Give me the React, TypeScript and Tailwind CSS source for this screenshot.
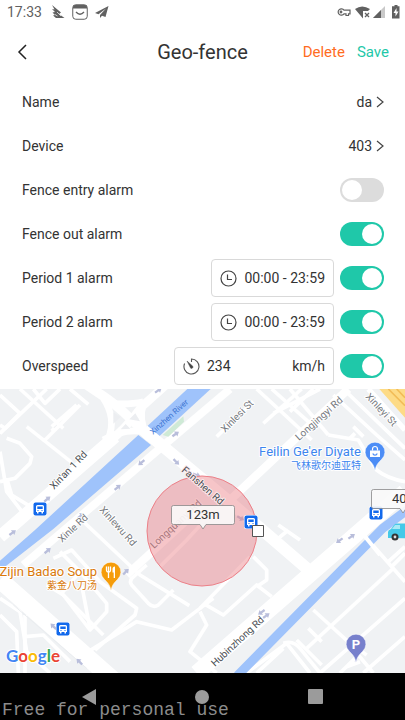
import { useId, useState } from "react";
import type { ReactNode } from "react";

const streetLabels = [
    { text: "Xin'an 1 Rd", x: 54, y: 101, angle: -46, size: 10, color: "#4b4f54" },
    { text: "Xinle Rd", x: 62, y: 154, angle: -43, size: 10, color: "#75797e" },
    { text: "Xinlewu Rd", x: 99, y: 121, angle: 48, size: 10, color: "#75797e" },
    { text: "Xinlesi St", x: 225, y: 44, angle: -45, size: 10, color: "#75797e" },
    { text: "Longjingyi Rd", x: 299, y: 52, angle: -42, size: 10, color: "#75797e" },
    { text: "Xinleyi St", x: 365, y: 8, angle: 47, size: 10, color: "#75797e" },
    { text: "Hubinzhong Rd", x: 215, y: 278, angle: -43, size: 10, color: "#4b4f54" },
    { text: "Longquanyi Rd", x: 154, y: 160, angle: -43, size: 10, color: "#75797e" },
];

const minorRoads = [
    "M0 145 L140 12",
    "M60 12 L190 130",
    "M100 12 L135 55 L180 12",
    "M0 30 L60 85 L15 130 L0 120",
    "M80 125 L215 232",
    "M135 165 L240 60 M155 130 L165 140 M155 125 L230 60",
    "M20 160 L60 175 L95 215 L90 235 L45 280 L0 290",
    "M0 200 L20 320 L70 385 M20 280 L35 330 L100 370",
    "M210 12 L265 58",
    "M650 155 L760 50",
    "M770 12 L860 95 L935 165",
    "M815 12 L925 110",
    "M790 115 L905 12",
    "M820 85 L960 12",
    "M870 12 L985 150",
    "M940 12 L870 80",
    "M1030 12 L1215 190",
    "M1000 30 L1130 150 L1215 225",
    "M985 150 L1075 165 L1130 255 Q1160 280 1215 290",
    "M1050 160 L1065 145 M1060 125 L1090 155",
    "M250 410 L420 570 L568 662",
    "M160 520 L215 495 L300 590 L410 670 L405 690 L285 795",
    "M180 500 L240 560 L185 625 L310 750",
    "M140 600 L190 630 L270 735 L320 680 L320 655 L240 560",
    "M245 600 L270 730",
    "M0 640 L60 680 L80 800 L150 864",
    "M75 690 L75 864 M75 755 L130 750 L210 830",
    "M0 690 L50 740 L55 864",
    "M265 800 L410 710 L515 735 L600 670 L640 640",
    "M440 540 L395 580 Q388 590 395 600 L445 655 Q460 670 475 660 L520 615",
    "M480 545 L560 465 L620 400",
    "M600 670 L750 515",
    "M610 655 L670 690 L770 600 L815 635",
    "M760 515 L800 555 L800 585 L770 605",
    "M600 680 L620 720 L570 800 L650 864",
    "M835 420 L900 465 M835 460 L865 435",
    "M940 675 L1050 775 L1100 810",
    "M890 765 L965 840 M925 730 L965 770",
    "M920 790 L1180 550",
    "M1100 460 L1215 590",
    "M1165 530 L1215 485 M1175 545 L1215 505",
    "M960 864 L1215 640",
    "M1090 864 L1215 755",
    "M1020 864 L1075 810 L1120 864 M1040 845 L1080 830",
    "M740 864 L860 775 L930 864 M850 790 L770 864",
    "M850 775 Q880 765 900 790 L960 864",
];

// position and heading of the one-way arrows
const arrows: [number, number, number][] = [
    [475, 16, -35],
    [527, 147, -35],
    [424, 233, 140],
    [529, 231, 45],
    [590, 270, 20],
    [353, 307, -40],
    [142, 342, -40],
    [38, 443, -35],
    [243, 392, -40],
    [143, 497, -40],
    [378, 560, -45],
    [160, 724, 225],
    [238, 830, 225],
    [722, 400, 30],
    [1018, 467, 145],
    [1055, 454, -35],
    [784, 682, 145],
    [799, 692, -35],
];

const busStops: [number, number][] = [
    [40, 120],
    [63, 240],
    [376, 124],
    [251, 133],
];

function BusStop({ x, y }: { x: number; y: number }) {
    return (
        <g transform={`translate(${x} ${y})`}>
            <rect x="-7" y="-7" width="14" height="14" rx="2" fill="#fff" />
            <rect x="-6.5" y="-6.5" width="13" height="13" rx="2" fill="#1269ec" />
            <path d="M-4 -2.500q0-1.500 1.500-1.500h5q1.500 0 1.500 1.500V3H3v1.500H1.500V3h-3v1.500H-3V3h-1z" fill="#fff" />
            <path d="M-2.700-2.500h5.400V0h-5.400z" fill="#1269ec" />
            <path d="M-2.500 1h1v1h-1zM1.500 1h1v1h-1z" fill="#1269ec" />
        </g>
    );
}

function MapPin({ x, y, color, children }: { x: number; y: number; color: string; children: ReactNode }) {
    return (
        <g transform={`translate(${x} ${y})`}>
            <path
                d="M0 18.500C-1.200 12.500-3.500 10.500-6.500 7.500A9.900 9.900 0 1 1 6.500 7.500C3.500 10.500 1.200 12.500 0 18.500z"
                fill={color}
                stroke="#fff"
                strokeWidth="0.500"
            />
            {children}
        </g>
    );
}

function Callout({ x, y, text }: { x: number; y: number; text: string }) {
    return (
        <g transform={`translate(${x} ${y})`}>
            <path
                d="M-29.500-9.500h59a2 2 0 0 1 2 2v15a2 2 0 0 1-2 2H3L0 14l-3-4.500h-26.500a2 2 0 0 1-2-2v-15a2 2 0 0 1 2-2z"
                fill="#fafafa"
                fillOpacity="0.900"
                stroke="#888"
                strokeWidth="0.800"
            />
            <text y="4" textAnchor="middle" fontSize="13" fill="#333">
                {text}
            </text>
        </g>
    );
}

function FenceMap() {
    return (
        <svg
            viewBox="0 0 405 284"
            preserveAspectRatio="xMidYMid slice"
            className="block h-full w-full"
            role="img"
            aria-label="Map"
        >
            <rect width="405" height="284" fill="#f0f2f4" />

            {/* roads and water */}
            <svg width="405" height="284" viewBox="0 12 1215 852" fill="none" strokeLinejoin="round">
                <path d="M1138 12H1215V98z" fill="#fddb86" />
                <path d="M1165 12L1215 62M1190 12L1215 38" stroke="#f2bd58" strokeWidth="5" />
                <path d="M1105 12L1215 135" stroke="#fff" strokeWidth="16" />
                <g stroke="#fff" strokeWidth="11">
                    {minorRoads.map((d) => (
                        <path key={d} d={d} />
                    ))}
                </g>
                <g stroke="#fff">
                    <path d="M0 455L345 155" strokeWidth="38" />
                    <path d="M70 540L480 190L690 12" strokeWidth="24" />
                    <path d="M230 -20L305 30Q350 60 385 95L450 158" strokeWidth="28" />
                    <path d="M520 -20L425 65Q375 135 320 175" strokeWidth="26" />
                    <path d="M310 40Q350 100 325 160M430 60Q415 100 440 150M320 55Q390 60 430 50M310 165Q370 130 430 140" strokeWidth="20" />
                    <path d="M380 570L610 360" strokeWidth="24" />
                    <path d="M680 355L1045 12" strokeWidth="25" />
                    <path d="M0 585L340 885" strokeWidth="52" />
                    <path d="M590 864L1215 320" strokeWidth="48" />
                </g>
                <path d="M40 660L260 850" stroke="#eaedf0" strokeWidth="3" />
                <path d="M562 12H632L468 163L440 125z" fill="#9fc3fb" />
                <path d="M415 150L453 180L160 432L15 545H0V527L105 435z" fill="#9fc3fb" />
                <path d="M488 150L550 94L552 110L505 155z" fill="#cfead6" />
                <path d="M1225 372L1148 430L712 872" stroke="#9fc3fb" strokeWidth="27" />
                <path d="M430 135L700 360L920 550" stroke="#fff" strokeWidth="36" />
                <path d="M1075 430L1140 510" stroke="#fff" strokeWidth="12" />
                <path d="M340 82l22 14l-22 20zM388 103l18-18l14 24zM362 133l15-16l14 14z" fill="#eceef1" />
                {arrows.map(([x, y, angle]) => (
                    <path
                        key={`${x}-${y}`}
                        transform={`translate(${x} ${y}) rotate(${angle})`}
                        d="M-12-3.500H0V-9L12 0L0 9V3.500H-12z"
                        fill="#b9bedb"
                    />
                ))}
            </svg>

            <g fontFamily='Roboto, "Noto Sans CJK SC", sans-serif'>
                <g stroke="#fff" strokeWidth="2" strokeLinejoin="round" paintOrder="stroke">
                    {streetLabels.map((label) => (
                        <text
                            key={label.text}
                            transform={`translate(${label.x} ${label.y}) rotate(${label.angle})`}
                            fontSize={label.size}
                            fill={label.color}
                        >
                            {label.text}
                        </text>
                    ))}
                </g>
                <text transform="translate(153 46) rotate(-42)" fontSize="8" fill="#3b73d1">
                    Xinzhen River
                </text>

                {/* geofence area */}
                <circle cx="202" cy="142" r="55" fill="#e9757d" fillOpacity="0.420" stroke="#ec8088" strokeWidth="1" />
                <text
                    transform="translate(181 82) rotate(41)"
                    fontSize="10"
                    fill="#4b4f54"
                    stroke="#fbe9eb"
                    strokeWidth="2"
                    strokeLinejoin="round"
                    paintOrder="stroke"
                >
                    Fanshen Rd
                </text>

                {busStops.map(([x, y]) => (
                    <BusStop key={x} x={x} y={y} />
                ))}

                <g textAnchor="end" stroke="#fff" strokeWidth="2" strokeLinejoin="round" paintOrder="stroke">
                    <text x="361" y="67" fontSize="13" fill="#3d85ee">Feilin Ge'er Diyate</text>
                    <text x="361" y="80" fontSize="10" fill="#3d85ee">飞林歌尔迪亚特</text>
                    <text x="97" y="187" fontSize="13" fill="#d9790b">Zijin Badao Soup</text>
                    <text x="97" y="200" fontSize="10" fill="#d9790b">紫金八刀汤</text>
                </g>

                <MapPin x={375} y={63} color="#4c8df6">
                    <path d="M-5-1.500H5V5H-5z" fill="#fff" />
                    <path d="M-2.500-1.500V-3a2.500 2.500 0 0 1 5 0v1.500" fill="none" stroke="#fff" strokeWidth="1.200" />
                    <path d="M-2.200 1.500a2.300 2.300 0 0 0 4.400 0" fill="none" stroke="#4c8df6" strokeWidth="1.200" />
                </MapPin>
                <MapPin x={111} y={183} color="#f59c0a">
                    <path d="M-4.500-5.500V-2q0 2 2 2t2-2v-3.500M-2.500-5.500V6" fill="none" stroke="#fff" strokeWidth="1.300" />
                    <path d="M1.500 0.500V-3q0-2.500 2.500-2.500V6H2.700V0.500z" fill="#fff" />
                </MapPin>
                <MapPin x={356} y={255} color="#7780cc">
                    <text y="5" textAnchor="middle" fontSize="13" fontWeight="700" fill="#fff">P</text>
                </MapPin>

                {/* vehicle */}
                <path d="M388 149v-6q0-2 3-3l3-4q1-1.500 3-1.500h20v15z" fill="#45c9e8" />
                <path d="M392 140l3-4h5v4z" fill="#a9e9f5" />
                <circle cx="395" cy="148" r="3.500" fill="#333" />
                <circle cx="395" cy="148" r="1.400" fill="#ddd" />

                <Callout x={203} y={126} text="123m" />
                <Callout x={403} y={110} text="403" />
                <path d="M252.500 136.500h11v11h-11z" fill="#fff" stroke="#555" />

                <g
                    fontFamily="Lato, sans-serif"
                    fontSize="17"
                    fontWeight="700"
                    stroke="#fff"
                    strokeWidth="2"
                    paintOrder="stroke"
                >
                    <text x="6" y="273">
                        <tspan fill="#4285f4">G</tspan>
                        <tspan fill="#ea4335">o</tspan>
                        <tspan fill="#fbbc05">o</tspan>
                        <tspan fill="#4285f4">g</tspan>
                        <tspan fill="#34a853">l</tspan>
                        <tspan fill="#ea4335">e</tspan>
                    </text>
                </g>
            </g>
        </svg>
    );
}

function StatusBar() {
    return (
        <div className="flex h-6 items-center justify-between pr-[2px] pl-[7px] text-[#616161]">
            <div className="flex items-center gap-[7px]">
                <span className="mr-[2px] text-sm">17:33</span>
                <svg width="14" height="14" viewBox="0 0 14 14" fill="currentColor">
                    <path d="M1 0L10 7.500L8 9L13.500 13H5L2 10.500L4 10L1.500 7.500L4 7L1 4L3.500 4.500z" />
                    <path d="M4 9.500L6.500 11M6 7L10 11" stroke="#fff" strokeWidth="0.700" />
                </svg>
                <svg width="16" height="16" viewBox="0 0 16 16" fill="none">
                    <rect x="0.750" y="0.750" width="14.500" height="14.500" rx="3" stroke="currentColor" />
                    <path d="M1 4.500V3q0-2 2-2h10q2 0 2 2v1.500z" fill="currentColor" />
                    <path d="M4 8q4 4.500 8 0" stroke="currentColor" strokeWidth="1.300" />
                </svg>
                <svg width="14" height="14" viewBox="0 0 14 14" fill="currentColor">
                    <path d="M13.500 1L0 8L3.500 9.200L11 3.500L5 10V13L7 10.800L10.500 12z" />
                </svg>
            </div>
            <div className="flex items-center gap-[2px]">
                <svg width="14" height="10" viewBox="0 0 14 10" fill="none" stroke="currentColor" strokeWidth="1.200" className="mr-[2px]">
                    <path d="M7 3.200A3.200 3.200 0 1 0 7 6.800H9V8.500H11.500V6.800H13V3.200z" />
                    <circle cx="4" cy="5" r="0.800" />
                </svg>
                <svg width="16" height="13" viewBox="0 0 16 13">
                    <path d="M0 3Q7-2 15 3L13 5H8V12.500z" fill="currentColor" />
                    <path d="M10 7l4 4M14 7l-4 4" stroke="currentColor" strokeWidth="1.300" />
                </svg>
                <svg width="12" height="12" viewBox="0 0 12 12">
                    <path d="M12 0V12H0z" fill="#c9c9c9" />
                    <path d="M8 4V12H0z" fill="currentColor" />
                </svg>
                <svg width="16" height="14" viewBox="0 0 16 14">
                    <path d="M6 1.200H7.500V0H10.500V1.200H12.500V13.500H5V1.200z" fill="currentColor" />
                    <path d="M9.500 3L6.500 8H8.500V11.500L11.500 6.500H9.500z" fill="#fff" />
                </svg>
            </div>
        </div>
    );
}

function Chevron() {
    return (
        <svg width="8" height="12" viewBox="0 0 8 12" fill="none" stroke="#444" strokeWidth="1.200">
            <path d="M1 1L7 6L1 11" />
        </svg>
    );
}

function ClockIcon() {
    return (
        <svg width="17" height="17" viewBox="0 0 17 17" fill="none" stroke="#444" strokeWidth="1.200">
            <circle cx="8.500" cy="8.500" r="7.500" />
            <path d="M7.500 4.500V9.500H12" />
        </svg>
    );
}

function SpeedIcon() {
    return (
        <svg width="17" height="17" viewBox="0 0 17 17" fill="none" stroke="#555" strokeWidth="1.100">
            <path d="M8.500 4V1A7.500 7.500 0 1 1 1.600 5.500" />
            <path d="M4 3L9.800 8.200A1.500 1.500 0 0 1 7.700 10.200z" fill="#444" strokeWidth="0.500" />
        </svg>
    );
}

function LinkRow({ label, value }: { label: string; value: string }) {
    return (
        <button type="button" className="flex h-11 w-full items-center justify-between">
            <span>{label}</span>
            <span className="flex items-center gap-1">
                {value}
                <Chevron />
            </span>
        </button>
    );
}

interface SwitchRowProps {
    label: string;
    defaultOn?: boolean;
    children?: ReactNode;
}

function SwitchRow({ label, defaultOn = true, children }: SwitchRowProps) {
    const id = useId();
    const [on, setOn] = useState(defaultOn);

    return (
        <div className="flex h-11 items-center gap-[6px]">
            <label htmlFor={id} className="flex-1">
                {label}
            </label>
            {children}
            <input
                id={id}
                type="checkbox"
                role="switch"
                checked={on}
                onChange={(e) => setOn(e.target.checked)}
                className="flex h-6 w-11 shrink-0 appearance-none items-center rounded-full bg-[#dcdcdc] px-[2px] before:h-5 before:w-5 before:rounded-full before:bg-white checked:justify-end checked:bg-[#1fc8a9]"
            />
        </div>
    );
}

function PeriodButton() {
    return (
        <button
            type="button"
            className="flex h-[38px] items-center gap-[7px] rounded-sm border border-[#d9d9d9] px-2"
        >
            <ClockIcon />
            00:00 - 23:59
        </button>
    );
}

export default function App() {
    const [speed, setSpeed] = useState("234");

    return (
        <div className="relative flex min-h-screen flex-col overflow-hidden bg-white font-[Roboto,sans-serif] text-sm text-[#333]">
            <StatusBar />

            <header className="grid h-14 grid-cols-[1fr_auto_1fr] items-center px-4">
                <button type="button" aria-label="Back" className="justify-self-start">
                    <svg width="12" height="16" viewBox="0 0 12 16" fill="none" stroke="#222" strokeWidth="1.500">
                        <path d="M10 1L3 8L10 15" />
                    </svg>
                </button>
                <h1 className="text-xl">Geo-fence</h1>
                <div className="flex gap-3 justify-self-end text-[15px] leading-6">
                    <button type="button" className="text-[#ff6d1f]">Delete</button>
                    <button type="button" className="text-[#1fc8a9]">Save</button>
                </div>
            </header>

            <section className="pr-[21px] pb-px pl-[22px]">
                <LinkRow label="Name" value="da" />
                <LinkRow label="Device" value="403" />
                <SwitchRow label="Fence entry alarm" defaultOn={false} />
                <SwitchRow label="Fence out alarm" />
                <SwitchRow label="Period 1 alarm">
                    <PeriodButton />
                </SwitchRow>
                <SwitchRow label="Period 2 alarm">
                    <PeriodButton />
                </SwitchRow>
                <SwitchRow label="Overspeed">
                    <label className="flex h-[38px] w-40 items-center gap-[7px] rounded-sm border border-[#d9d9d9] px-2">
                        <SpeedIcon />
                        <input
                            type="text"
                            inputMode="numeric"
                            aria-label="Speed limit"
                            value={speed}
                            onChange={(e) => setSpeed(e.target.value)}
                            className="w-0 flex-1 outline-none"
                        />
                        <span>km/h</span>
                    </label>
                </SwitchRow>
            </section>

            <div className="h-0 min-h-64 flex-1">
                <FenceMap />
            </div>

            <nav className="flex h-[47px] items-center justify-around bg-black px-8 text-[#9b9b9b]">
                <button type="button" aria-label="Back">
                    <svg width="14" height="16" viewBox="0 0 14 16" fill="currentColor">
                        <path d="M14 0V16L0 8z" />
                    </svg>
                </button>
                <button type="button" aria-label="Home">
                    <svg width="14" height="14" viewBox="0 0 14 14" fill="currentColor">
                        <circle cx="7" cy="7" r="7" />
                    </svg>
                </button>
                <button type="button" aria-label="Recent apps">
                    <svg width="15" height="15" viewBox="0 0 15 15" fill="currentColor">
                        <rect width="15" height="15" rx="1" />
                    </svg>
                </button>
            </nav>

            <p className="pointer-events-none absolute bottom-0 left-[2px] font-['Liberation_Mono',monospace] text-lg leading-5 text-[#8c8c8c]">
                Free for personal use
            </p>
        </div>
    );
}
